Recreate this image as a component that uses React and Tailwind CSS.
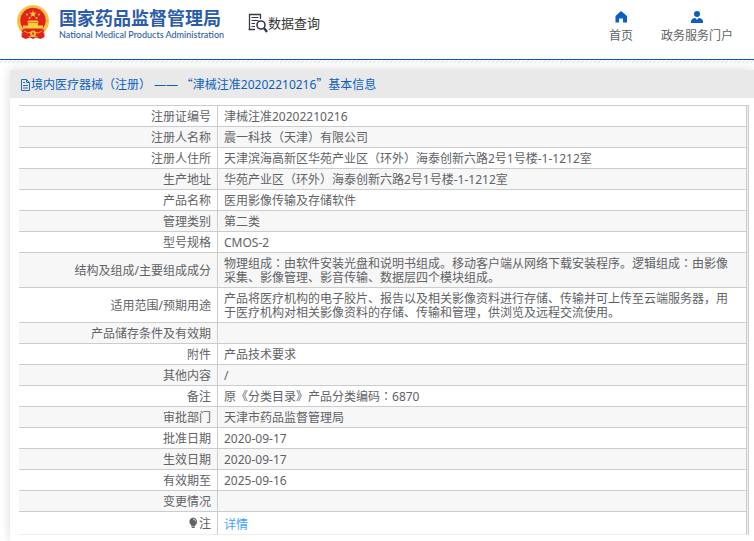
import React from "react";

const rows = [
  ["注册证编号", "津械注准20202210216"],
  ["注册人名称", "震一科技（天津）有限公司"],
  ["注册人住所", "天津滨海高新区华苑产业区（环外）海泰创新六路2号1号楼-1-1212室"],
  ["生产地址", "华苑产业区（环外）海泰创新六路2号1号楼-1-1212室"],
  ["产品名称", "医用影像传输及存储软件"],
  ["管理类别", "第二类"],
  ["型号规格", "CMOS-2"],
  [
    "结构及组成/主要组成成分",
    "物理组成：由软件安装光盘和说明书组成。移动客户端从网络下载安装程序。逻辑组成：由影像采集、影像管理、影音传输、数据层四个模块组成。",
  ],
  [
    "适用范围/预期用途",
    "产品将医疗机构的电子胶片、报告以及相关影像资料进行存储、传输并可上传至云端服务器，用于医疗机构对相关影像资料的存储、传输和管理，供浏览及远程交流使用。",
  ],
  ["产品储存条件及有效期", ""],
  ["附件", "产品技术要求"],
  ["其他内容", "/"],
  ["备注", "原《分类目录》产品分类编码：6870"],
  ["审批部门", "天津市药品监督管理局"],
  ["批准日期", "2020-09-17"],
  ["生效日期", "2020-09-17"],
  ["有效期至", "2025-09-16"],
  ["变更情况", ""],
];

// Sets colons in the middle of their full-width cell.
function CenteredColons({ text }) {
  return text.split(/(：)/).map((part, i) =>
    i % 2 ? (
      <span key={i} lang="zh-Hant" className="font-['Noto_Sans_CJK_TC',sans-serif] leading-0">
        {part}
      </span>
    ) : (
      part
    ),
  );
}

function Emblem() {
  return (
    <svg className="h-[35px] w-8 shrink-0" viewBox="0 0 32 35" aria-hidden="true">
      <path d="M5 24 L4.500 32 L8.500 34 L13 32.500 L16 34 L19 32.500 L23.500 34 L27.500 32 L27 24 Z" fill="#e0231c" />
      <circle cx="16" cy="16" r="16" fill="#f7c945" />
      <circle cx="16" cy="16" r="14.300" fill="none" stroke="#eba733" strokeWidth="0.800" strokeDasharray="2 1.500" />
      <circle cx="16" cy="15.500" r="12.700" fill="#e2231a" />
      <path d="M16 5 L16.900 7.700 H19.700 L17.400 9.400 L18.300 12 L16 10.400 L13.700 12 L14.600 9.400 L12.300 7.700 H15.100 Z" fill="#f9cf3c" />
      <g fill="#f9cf3c">
        <circle cx="10" cy="9.500" r="1" />
        <circle cx="22" cy="9.500" r="1" />
        <circle cx="12.500" cy="13" r="1" />
        <circle cx="19.500" cy="13" r="1" />
        <path d="M11.500 15.500 H20.500 L22 17.500 H10 Z" />
        <path d="M11 18 H21 V20.500 H26 V23.500 H6 V20.500 H11 Z" />
      </g>
      <path d="M4.500 24.500 H27.500 L25 31 H7 Z" fill="#e2231a" />
      <path d="M7 26 Q11 29 13 27.500 H19 Q21 29 25 26" fill="none" stroke="#f3b72f" strokeWidth="1" />
      <circle cx="16" cy="28.500" r="3" fill="#f3b72f" />
      <circle cx="16" cy="28.500" r="1.100" fill="#e2231a" />
    </svg>
  );
}

function SearchDocIcon() {
  return (
    <svg className="h-5 w-5 shrink-0" viewBox="0 0 20 20" fill="none" stroke="#38384a" aria-hidden="true">
      <path d="M7 16.500 H0.500 M1.500 16.500 V1.500 H12.500 V6" strokeWidth="1.300" />
      <path d="M3.500 4.500 H10.500 M3.500 7.500 H10.500 M3.500 10.500 H7 M3.500 13.500 H7" strokeWidth="1" />
      <circle cx="13" cy="12" r="4" strokeWidth="1.600" />
      <path d="M16 15 L19 19" strokeWidth="2.300" />
    </svg>
  );
}

function HomeIcon() {
  return (
    <svg className="h-3 w-3" viewBox="0 0 12 12" fill="#0b5fc4" aria-hidden="true">
      <path d="M6 0 L12 5 V11.500 H8 V7.500 H4 V11.500 H0.500 V5 Z" />
    </svg>
  );
}

function UserIcon() {
  return (
    <svg className="h-3 w-3" viewBox="0 0 12 12" aria-hidden="true">
      <circle cx="6" cy="3" r="3" fill="#0b5fc4" />
      <path d="M0 12 V10 Q1 7 4.500 7 H7.500 Q11 7 12 10 V12 Z" fill="#0b5fc4" />
      <path d="M4.500 7 L6 9 L7.500 7 Z" fill="#fff" />
    </svg>
  );
}

function DocumentIcon() {
  return (
    <svg className="h-3 w-[11px] shrink-0" viewBox="0 0 11 12" fill="none" stroke="#0b5fc4" strokeWidth="0.900" aria-hidden="true">
      <path d="M1.500 0.500 H6.500 L9.500 3.500 V11.500 H1.500 Z M6.500 0.500 V3.500 H9.500 M3 3.500 H5 M3 6.500 H8 M3 9 H8" />
    </svg>
  );
}

function BulbIcon() {
  return (
    <svg className="inline-block h-3 w-3 align-[-1px]" viewBox="0 0 12 12" aria-hidden="true">
      <path d="M6 0.500 A4.200 4.200 0 0 1 8.500 8 L8 9.500 H4.500 L4 8 A4.200 4.200 0 0 1 6 0.500 Z M4.700 10 H7.700 V11 H4.700 Z" fill="#606266" />
      <path d="M6 2 Q8.500 2.200 8.700 4.500" fill="none" stroke="#fff" strokeWidth="0.700" />
    </svg>
  );
}

export default function App() {
  return (
    <div className="min-h-screen bg-white font-['Noto_Sans','Noto_Sans_CJK_SC',sans-serif] text-xs leading-[14px] text-[#606266]">
      <header className="flex h-[60px] items-start justify-between border-b border-[#0b5fc4] pr-[21px] pl-[17px]">
        <div className="flex items-start pt-[5px]">
          <Emblem />
          <div className="ml-[10px] pt-[2px] whitespace-nowrap text-[#2b5caa]">
            <h1 className="text-lg leading-[22px] font-bold">国家药品监督管理局</h1>
            <p className="font-['Lato',sans-serif] text-[9px] leading-3 font-medium">
              National Medical Products Administration
            </p>
          </div>
          <div className="ml-6 flex items-center pt-2 text-[13px] leading-5 whitespace-nowrap text-[#333]">
            <SearchDocIcon />
            <span>数据查询</span>
          </div>
        </div>
        <nav className="flex gap-7 pt-[11px] whitespace-nowrap">
          <a href="#home" className="flex flex-col items-center gap-[6px]">
            <HomeIcon />
            首页
          </a>
          <a href="#portal" className="flex flex-col items-center gap-[6px]">
            <UserIcon />
            政务服务门户
          </a>
        </nav>
      </header>
      <div className="h-[3px] bg-[repeating-linear-gradient(135deg,#fff_0px,#fff_1px,#e2e2e2_2px,#fff_3px)]" />
      <main className="mt-[7px] ml-[10px] shadow-[0_0_10px_rgba(0,0,0,0.15)]">
        <h2 className="flex h-7 items-center bg-[#e9e9e9] pt-px pl-[10px] text-[#0b5fc4]">
          <DocumentIcon />
          <span className="whitespace-pre">
            境内医疗器械（注册） ——
            <span className="font-['Noto_Sans_CJK_SC',sans-serif] leading-0"> “</span>
            津械注准20202210216
            <span className="font-['Noto_Sans_CJK_SC',sans-serif] leading-0">”</span>
            基本信息
          </span>
        </h2>
        <div className="bg-white pt-[7px] pr-[5px] pb-[6px] pl-[9px]">
          <div className="border-t border-r border-[#ccc] bg-[#ebeef5] pr-px">
            <table className="w-full border-separate border-spacing-0 bg-white">
              <tbody>
                {rows.map(([label, value]) => (
                  <tr key={label} className="even:bg-[#f7f7f7]">
                    <th scope="row" className="w-[199px] border-r border-b border-[#ccc] pt-1 pr-[6px] pb-[2px] text-right font-normal">
                      {label}
                    </th>
                    <td className="border-r border-b border-[#ccc] pt-1 pr-3 pb-[2px] pl-[6px]">
                      <CenteredColons text={value} />
                    </td>
                  </tr>
                ))}
                <tr>
                  <th scope="row" className="border-r border-b border-r-[#ccc] border-b-[#ebeef5] pt-[5px] pr-[6px] pb-[3px] text-right font-normal">
                    <BulbIcon />注
                  </th>
                  <td className="border-r border-b border-r-[#ccc] border-b-[#ebeef5] pt-[6px] pr-3 pb-[2px] pl-[6px]">
                    <a href="#detail" className="text-[#409eff]">详情</a>
                  </td>
                </tr>
              </tbody>
            </table>
          </div>
        </div>
      </main>
    </div>
  );
}
